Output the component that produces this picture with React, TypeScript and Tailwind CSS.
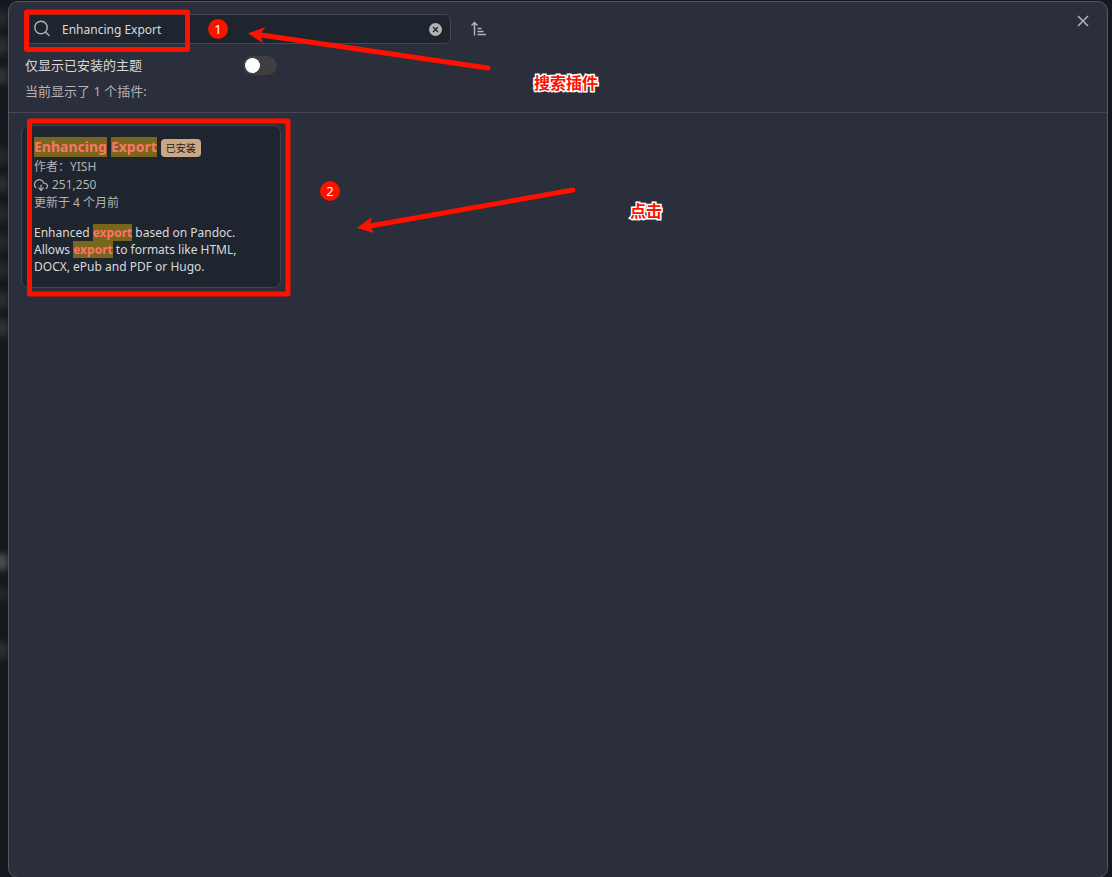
import type { ReactNode } from "react";
import { useState } from "react";

const SMUDGES = [
    "top-[10px] h-4 bg-[#26292e]",
    "top-[38px] h-4 bg-[#2b2e33]",
    "top-[68px] h-4 bg-[#303338]",
    "top-[148px] h-4 bg-[#25282d]",
    "top-[176px] h-4 bg-[#2b2e33]",
    "top-[206px] h-4 bg-[#25282d]",
    "top-[234px] h-4 bg-[#25282d]",
    "top-[262px] h-4 bg-[#25282d]",
    "top-[292px] h-4 bg-[#2b2e33]",
    "top-[320px] h-4 bg-[#303338]",
    "top-[554px] h-4 bg-[#4a4d50]",
    "top-[588px] h-3 bg-[#24272b]",
    "top-[642px] h-4 bg-[#2b2e33]",
];

function Highlight({ children }: { children: ReactNode }) {
    return (
        <mark className="bg-[#77661b] font-bold text-[#ff7468]">{children}</mark>
    );
}

function SearchBox() {
    const [query, setQuery] = useState("Enhancing Export");

    return (
        <div className="flex h-[30px] w-[426px] items-center rounded-md border border-[#454852] bg-[#1e252f] px-2">
            <svg
                className="size-[18px] shrink-0"
                viewBox="0 0 18 18"
                fill="none"
                stroke="#b3b3b3"
                strokeWidth="1.4"
                strokeLinecap="round"
            >
                <circle cx="7" cy="7.5" r="6.2" />
                <path d="M11.6 12.1 15 15.5" />
            </svg>
            <input
                type="text"
                aria-label="搜索"
                value={query}
                onChange={(e) => setQuery(e.target.value)}
                className="ml-2.5 min-w-0 flex-1 bg-transparent pt-0.5 text-[12px] text-[#dadada] outline-none"
            />
            <button
                type="button"
                aria-label="清除"
                onClick={() => setQuery("")}
                className="shrink-0"
            >
                <svg className="size-[13px]" viewBox="0 0 13 13">
                    <circle cx="6.5" cy="6.5" r="6.5" fill="#b3b3b3" />
                    <path
                        d="M4 4l5 5M9 4l-5 5"
                        stroke="#1e252f"
                        strokeWidth="1.3"
                    />
                </svg>
            </button>
        </div>
    );
}

function PluginCard() {
    return (
        <article className="w-[260px] rounded-lg border border-[#40434e] bg-[#1e252f] px-3 pt-[11px] pb-3">
            <h2 className="flex items-end gap-1 text-[14px] leading-5 font-bold">
                <Highlight>Enhancing</Highlight>
                <Highlight>Export</Highlight>
                <span className="rounded bg-[#cba783] px-[5px] text-[10px] leading-[18px] font-normal text-[#1b1b1b]">
                    已安装
                </span>
            </h2>
            <div className="mt-px text-[12px] leading-[18px] text-[#b3b3b3]">
                <p>作者：YISH</p>
                <p className="flex items-center gap-1">
                    <svg
                        className="size-[14px]"
                        viewBox="0 0 24 24"
                        fill="none"
                        stroke="currentColor"
                        strokeWidth="2"
                        strokeLinecap="round"
                        strokeLinejoin="round"
                    >
                        <path d="m8 17 4 4 4-4" />
                        <path d="M12 12v9" />
                        <path d="M20.9 18.1A5 5 0 0 0 18 9h-1.3A8 8 0 1 0 3 16.3" />
                    </svg>
                    251,250
                </p>
                <p>更新于 4 个月前</p>
            </div>
            <p className="mt-3 text-[12px] leading-[17px] text-[#dadada]">
                Enhanced <Highlight>export</Highlight> based on Pandoc. Allows{" "}
                <Highlight>export</Highlight> to formats like HTML, DOCX, ePub and
                PDF or Hugo.
            </p>
        </article>
    );
}

function Annotations() {
    return (
        <div className="pointer-events-none absolute inset-0 text-[#ff1100]">
            <svg className="absolute top-0 left-0" width="600" height="310">
                <g fill="none" stroke="currentColor" strokeWidth="5" strokeLinecap="round">
                    <rect x="26.5" y="12" width="161" height="37.5" rx="0.5" />
                    <rect x="29.5" y="121" width="258.5" height="173" rx="0.5" />
                    <path d="M261 35 488 68" />
                    <path d="M370 226 573 190" />
                </g>
                <g fill="currentColor">
                    <path d="M248 33.3 265.5 27 260 34.5 263 43.3Z" />
                    <path d="M357 228 371.7 217 370 226 374 233Z" />
                </g>
            </svg>
            <span className="absolute top-[19px] left-[208px] size-5 rounded-full bg-[#ff1100] text-center text-[13px] leading-5 text-white">
                1
            </span>
            <span className="absolute top-[181px] left-[320px] size-5 rounded-full bg-[#ff1100] text-center text-[13px] leading-5 text-white">
                2
            </span>
            <span className="absolute top-[71px] left-[534px] text-[16px] leading-6 font-bold [paint-order:stroke_fill] [-webkit-text-stroke:3px_white]">
                搜索插件
            </span>
            <span className="absolute top-[199px] left-[630px] text-[16px] leading-6 font-bold [paint-order:stroke_fill] [-webkit-text-stroke:3px_white]">
                点击
            </span>
        </div>
    );
}

export default function App() {
    const [installedOnly, setInstalledOnly] = useState(false);

    return (
        <div className="relative h-screen overflow-hidden bg-[#15191f] pt-px pr-1 pl-2 font-['Noto_Sans','Noto_Sans_CJK_SC',sans-serif]">
            {/* blurred app behind the dialog */}
            {SMUDGES.map((smudge) => (
                <span key={smudge} className={`absolute -left-2 w-4 blur-[3px] ${smudge}`} />
            ))}

            <main className="relative h-screen rounded-[10px] border border-[#54575c] bg-[#2b2e3b]">
                <button
                    type="button"
                    aria-label="关闭"
                    className="absolute top-[11px] right-4 text-[#b3b3b3]"
                >
                    <svg
                        className="size-4"
                        viewBox="0 0 16 16"
                        fill="none"
                        stroke="currentColor"
                        strokeWidth="1.5"
                    >
                        <path d="M3 3l10 10M13 3 3 13" />
                    </svg>
                </button>

                <header className="border-b border-[#454852] px-4 pt-3 pb-[11px]">
                    <div className="flex items-center gap-5">
                        <SearchBox />
                        <button type="button" aria-label="排序" className="text-[#b3b3b3]">
                            <svg
                                className="size-4"
                                viewBox="0 0 16 16"
                                fill="none"
                                stroke="currentColor"
                                strokeWidth="1.5"
                            >
                                <path d="M3.5 14.5V1.5M.5 4.5l3-3 3 3" />
                                <path d="M6.500 7.500h4M6.500 10.500h6M6.500 13.500h8.500" />
                            </svg>
                        </button>
                    </div>
                    <div className="mt-[11px] flex w-[252px] items-center justify-between">
                        <label htmlFor="installed-only" className="text-[13px] leading-5 text-[#dadada]">
                            仅显示已安装的主题
                        </label>
                        <input
                            id="installed-only"
                            type="checkbox"
                            role="switch"
                            checked={installedOnly}
                            onChange={(e) => setInstalledOnly(e.target.checked)}
                            className="h-[19px] w-[34px] appearance-none rounded-full bg-[#3f3f3f] p-0.5 before:block before:size-[15px] before:rounded-full before:bg-white checked:before:ml-auto"
                        />
                    </div>
                    <p className="mt-1.5 text-[13px] leading-5 text-[#b3b3b3]">
                        当前显示了 1 个插件:
                    </p>
                </header>

                <div className="p-3">
                    <PluginCard />
                </div>
            </main>

            <Annotations />
        </div>
    );
}
